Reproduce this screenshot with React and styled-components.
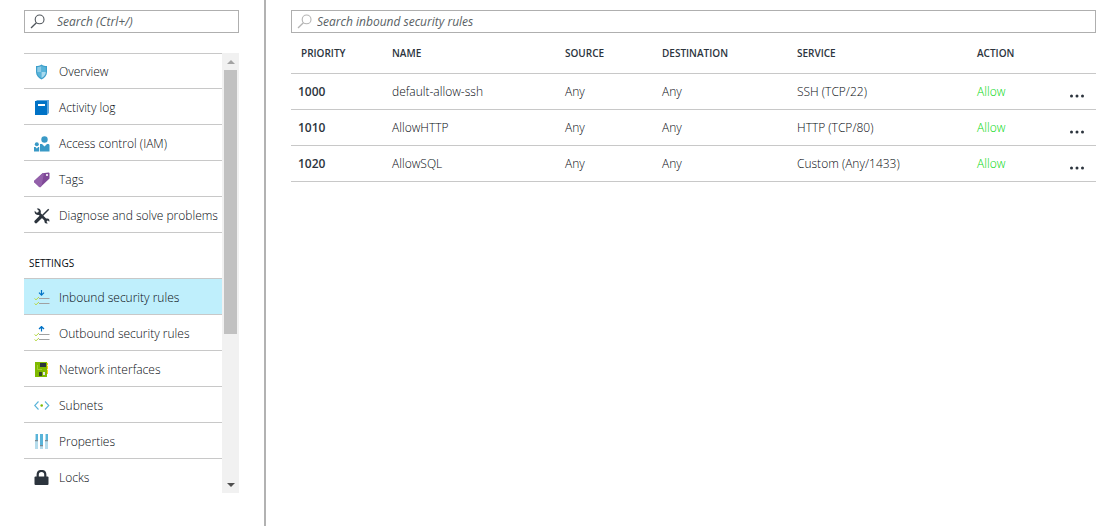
import React from "react";
import styled, { createGlobalStyle } from "styled-components";

const GlobalStyle = createGlobalStyle`
  *, *::before, *::after { box-sizing: border-box; }
  body {
    margin: 0;
    background: #fff;
    color: #060a10;
    font-family: "Open Sans", "Noto Sans", sans-serif;
    font-size: 12px;
    line-height: 16px;
    font-weight: 330;
  }
`;

const Page = styled.div`
  display: flex;
  min-height: 100vh;
`;

const Sidebar = styled.aside`
  display: flex;
  flex-direction: column;
  flex: none;
  gap: 20px;
  width: 266px;
  height: 100vh;
  padding: 10px 25px 33px 24px;
  border-right: 2px solid #b2b2b2;
`;

const Main = styled.main`
  flex: 1;
  min-width: 0;
  padding: 10px 22px 10px 25px;
`;

const SearchBox = styled.label`
  display: flex;
  align-items: center;
  gap: ${(p) => p.$gap}px;
  height: 23px;
  flex: none;
  padding: 0 5px;
  border: 1px solid #afafaf;
  color: ${(p) => p.$iconColor};
`;

const SearchInput = styled.input`
  flex: 1;
  min-width: 0;
  padding: 0;
  border: 0;
  outline: 0;
  background: transparent;
  color: #2c343d;
  font: italic 12px/16px "Open Sans", "Noto Sans", sans-serif;
  &::placeholder {
    color: #595f65;
    opacity: 1;
  }
`;

const MenuPane = styled.div`
  display: flex;
  flex: 1;
  min-height: 0;
`;

const Menu = styled.nav`
  flex: 1;
  min-width: 0;
  overflow-y: scroll;
  scrollbar-width: none;
`;

const MenuLink = styled.a`
  display: flex;
  align-items: center;
  gap: 9px;
  height: 36px;
  padding: 3px 0 0 10px;
  border-bottom: 1px solid #c8c8c8;
  background: ${(p) => (p.$active ? "#bfeffc" : "transparent")};
  color: inherit;
  text-decoration: none;
  white-space: nowrap;
`;

const MenuList = styled.ul`
  margin: 0;
  padding: 0;
  list-style: none;

  & > li:first-child > ${MenuLink} {
    border-top: ${(p) => (p.$ruled ? "1px solid #c8c8c8" : "0")};
    padding-top: ${(p) => (p.$ruled ? "2px" : "3px")};
  }
`;

const MenuHeading = styled.h2`
  height: 46px;
  margin: 0;
  padding: 22px 5px 0;
  border-bottom: 1px solid #c8c8c8;
  font-size: 10px;
  line-height: 16px;
  font-weight: 400;
`;

const ScrollTrack = styled.div`
  display: flex;
  flex-direction: column;
  flex: none;
  width: 17px;
  background: #f1f1f1;
`;

const ScrollArrow = styled.button`
  display: flex;
  align-items: center;
  justify-content: center;
  height: 17px;
  padding: 0;
  border: 0;
  background: transparent;
  color: ${(p) => (p.$dim ? "#a3a3a3" : "#505050")};
`;

const ScrollRun = styled.div`
  flex: 1;
  padding: 0 2px;
`;

const ScrollThumb = styled.div`
  height: 65%;
  background: #c1c1c1;
`;

const RulesTable = styled.table`
  width: 100%;
  table-layout: fixed;
  border-collapse: separate;
  border-spacing: 0;
`;

const Column = styled.col`
  width: ${(p) => p.$width}px;
`;

const HeadCell = styled.th`
  height: 41px;
  padding: 0 0 0 ${(p) => (p.$first ? 10 : 0)}px;
  border-bottom: 1px solid #c8c8c8;
  color: #2c343d;
  font-size: 10px;
  line-height: 16px;
  font-weight: 600;
  text-align: left;
`;

const Cell = styled.td`
  height: 36px;
  padding: 1px 0 0;
  border-bottom: 1px solid #c8c8c8;
  color: ${(p) => (p.$allow ? "#00d80c" : "inherit")};
`;

const PriorityCell = styled.th`
  height: 36px;
  padding: 1px 0 0 7px;
  border-bottom: 1px solid #c8c8c8;
  color: #2c343d;
  font-weight: 600;
  text-align: left;
`;

const MoreButton = styled.button`
  display: block;
  width: 18px;
  height: 16px;
  margin: 0 10px 0 auto;
  padding: 8px 0 0;
  border: 0;
  background: transparent;
  color: #2c343d;
`;

const Icon = styled.svg`
  display: block;
  flex: none;
`;

const SearchIcon = () => (
  <Icon width="15" height="15" viewBox="0 0 15 15" fill="none" stroke="currentColor" aria-hidden="true">
    <circle cx="9.6" cy="5.4" r="4.4" strokeWidth="1.1" />
    <path d="M6.4 8.8 L1 14" strokeWidth="1.3" />
  </Icon>
);

const Glyph = ({ children }) => (
  <Icon width="16" height="16" viewBox="0 0 16 16" fill="none" aria-hidden="true">
    {children}
  </Icon>
);

const ShieldIcon = () => (
  <Glyph>
    <path d="M7.5 .5 C9 1.6 11 2 13 2 V8 C13 11.5 10.5 14 7.5 15.5 C4.5 14 2 11.5 2 8 V2 C4 2 6 1.6 7.5 .5Z" fill="#3d9fcb" />
    <path d="M7.5 2 C6.2 2.8 4.8 3.1 3.2 3.2 V8 H7.5Z" fill="#8dcbe6" />
    <path d="M7.5 2 C8.8 2.8 10.2 3.1 11.8 3.2 V8 H7.5Z" fill="#59b4d9" />
    <path d="M3.2 8 H7.5 V14 C5 12.7 3.2 10.8 3.2 8Z" fill="#59b4d9" />
    <path d="M11.8 8 H7.5 V14 C10 12.7 11.8 10.8 11.8 8Z" fill="#a9daee" />
  </Glyph>
);

const BookIcon = () => (
  <Glyph>
    <path d="M1 2 L3 0 H15 V13 L13 15 H1Z" fill="#5ea5dc" />
    <path d="M1 1 H13 V15 H1Z" fill="#0072c6" />
    <path d="M4 4 H11 V6 H4Z" fill="#fff" />
  </Glyph>
);

const PeopleIcon = () => (
  <Glyph>
    <circle cx="10.5" cy="3.5" r="3.2" fill="#3999c6" />
    <path d="M6 8 H8 L10.5 10.5 L13 8 H14 C15 8 15.5 8.5 15.5 9.5 V15.5 H6Z" fill="#3999c6" />
    <circle cx="2.8" cy="8.3" r="2" fill="#3999c6" />
    <path d="M0 11 H1.5 L2.8 12.5 L4.2 11 H5.2 V15.5 H0Z" fill="#3999c6" />
  </Glyph>
);

const TagIcon = () => (
  <Glyph>
    <path d="M0 9 L8.5 1.3 L14.5 .5 Q15.5 .5 15.5 1.5 V6.5 L6.5 15 Q5.8 15.5 5 14.8 L.3 10.2 Q-.2 9.6 0 9Z" fill="#804998" />
    <path d="M0 9 L8.5 1.3 L10 1 L7.5 14 L6.5 15 Q5.8 15.5 5 14.8 L.3 10.2 Q-.2 9.6 0 9Z" fill="#9360aa" />
    <circle cx="13" cy="3" r="1.1" fill="#fff" />
  </Glyph>
);

const ToolsIcon = () => (
  <Glyph>
    <path d="M14.7 1.2 L8.5 7.5" stroke="#2c343d" strokeWidth="1.5" />
    <path d="M7.2 8.5 L2 13.7" stroke="#2c343d" strokeWidth="3.2" strokeLinecap="round" />
    <path d="M4.5 4.8 L12.8 13" stroke="#2c343d" strokeWidth="2.6" />
    <path d="M2.8 .7 L4.9 2.7 L4.3 4.3 L2.7 4.8 L.7 2.8 C0 5.5 2.3 7.5 5 6.7 L6.7 5 C7.5 2.3 5.5 0 2.8 .7Z" fill="#2c343d" />
    <path d="M10.5 12.5 L12.5 10.5 C15 10 16 12 15.2 13.8 L13.7 12.3 L12.3 13.7 L13.8 15.2 C11.8 16 10 15 10.5 12.5Z" fill="#2c343d" />
  </Glyph>
);

const RuleLines = () => (
  <>
    <path d="M5 8.5 H15.5 M5 13.5 H15.5" stroke="#a0a1a2" strokeWidth="1.2" />
    <path d="M.5 8.5 L2 9.8 L5 7 M.5 13.5 L2 14.8 L5 12" stroke="#b8d94a" />
  </>
);

const InboundIcon = () => (
  <Glyph>
    <RuleLines />
    <path d="M7.5 0 V5 M5 2.7 L7.5 5.2 L10 2.7" stroke="#0072c6" strokeWidth="1.2" />
  </Glyph>
);

const OutboundIcon = () => (
  <Glyph>
    <RuleLines />
    <path d="M7.5 5.5 V.8 M5 3 L7.5 .5 L10 3" stroke="#0072c6" strokeWidth="1.2" />
  </Glyph>
);

const NetworkCardIcon = () => (
  <Glyph>
    <path d="M12 1 H14 V12 H12Z" fill="#fcd116" />
    <path d="M12 3 H14 V4 H12Z M12 7 H14 V8 H12Z" fill="#fff3b0" />
    <path d="M1 0 H13 V15 H1Z" fill="#7fba00" />
    <path d="M6 1 H12 V5 H6Z" fill="#2c343d" />
    <path d="M3.5 3 V7.5 H8" stroke="#a5cf30" />
    <path d="M5 10 H8 V14 H5Z" fill="#3a4a28" />
    <path d="M9 10 H11 V13 H9Z" fill="#e5e5e5" />
  </Glyph>
);

const SubnetIcon = () => (
  <Glyph>
    <path d="M4.5 3.5 L.7 7.5 L4.5 11.5 M11 3.5 L14.8 7.5 L11 11.5" stroke="#59b4d9" strokeWidth="1.1" />
    <circle cx="7.7" cy="7.5" r="1.3" fill="#7fba00" />
  </Glyph>
);

const SlidersIcon = () => (
  <Glyph>
    <path d="M1 0 H4 V15 H1Z M6 0 H9 V15 H6Z M11 0 H14 V15 H11Z" fill="#b5dcec" />
    <path d="M2 0 H4 V6 H2Z M6 0 H9 V11 H6Z M12 0 H14 V6 H12Z" fill="#59b4d9" />
    <path d="M1 6 H4 V7.2 H1Z M6 11 H9 V12.2 H6Z M11 6 H14 V7.2 H11Z" fill="#7a8a94" />
  </Glyph>
);

const LockIcon = () => (
  <Glyph>
    <path d="M3.7 8 V4.8 C3.7 -.3 11.3 -.3 11.3 4.8 V8" stroke="#2c343d" strokeWidth="2.2" />
    <rect x=".5" y="6.5" width="14" height="8.5" rx="1" fill="#2c343d" />
  </Glyph>
);

const Dots = () => (
  <Icon width="18" height="4" viewBox="0 0 18 4" fill="currentColor" aria-hidden="true">
    <circle cx="3.5" cy="2" r="1.5" />
    <circle cx="9" cy="2" r="1.5" />
    <circle cx="14.5" cy="2" r="1.5" />
  </Icon>
);

const generalItems = [
  { label: "Overview", icon: ShieldIcon },
  { label: "Activity log", icon: BookIcon },
  { label: "Access control (IAM)", icon: PeopleIcon },
  { label: "Tags", icon: TagIcon },
  { label: "Diagnose and solve problems", icon: ToolsIcon },
];

const settingsItems = [
  { label: "Inbound security rules", icon: InboundIcon, active: true },
  { label: "Outbound security rules", icon: OutboundIcon },
  { label: "Network interfaces", icon: NetworkCardIcon },
  { label: "Subnets", icon: SubnetIcon },
  { label: "Properties", icon: SlidersIcon },
  { label: "Locks", icon: LockIcon },
];

const columns = [
  { label: "PRIORITY", width: 101 },
  { label: "NAME", width: 173 },
  { label: "SOURCE", width: 97 },
  { label: "DESTINATION", width: 135 },
  { label: "SERVICE", width: 180 },
  { label: "ACTION", width: 79 },
];

const rules = [
  { priority: "1000", name: "default-allow-ssh", service: "SSH (TCP/22)" },
  { priority: "1010", name: "AllowHTTP", service: "HTTP (TCP/80)" },
  { priority: "1020", name: "AllowSQL", service: "Custom (Any/1433)" },
];

const MenuItems = ({ items, ruled }) => (
  <MenuList $ruled={ruled}>
    {items.map(({ label, icon: ItemIcon, active }) => (
      <li key={label}>
        <MenuLink href="#" $active={active} aria-current={active ? "page" : undefined}>
          <ItemIcon />
          {label}
        </MenuLink>
      </li>
    ))}
  </MenuList>
);

export default function App() {
  return (
    <Page>
      <GlobalStyle />
      <Sidebar>
        <SearchBox $gap={12} $iconColor="#50565c">
          <SearchIcon />
          <SearchInput type="text" placeholder="Search (Ctrl+/)" aria-label="Search menu" />
        </SearchBox>
        <MenuPane>
          <Menu aria-label="Resource menu">
            <MenuItems items={generalItems} ruled />
            <MenuHeading>SETTINGS</MenuHeading>
            <MenuItems items={settingsItems} />
          </Menu>
          <ScrollTrack>
            <ScrollArrow type="button" $dim aria-label="Scroll up">
              <Icon width="8" height="4" viewBox="0 0 8 4"><path d="M0 4 L4 0 L8 4Z" fill="currentColor" /></Icon>
            </ScrollArrow>
            <ScrollRun><ScrollThumb /></ScrollRun>
            <ScrollArrow type="button" aria-label="Scroll down">
              <Icon width="8" height="4" viewBox="0 0 8 4"><path d="M0 0 H8 L4 4Z" fill="currentColor" /></Icon>
            </ScrollArrow>
          </ScrollTrack>
        </MenuPane>
      </Sidebar>
      <Main>
        <SearchBox $gap={5} $iconColor="#b4b4b4">
          <SearchIcon />
          <SearchInput type="text" placeholder="Search inbound security rules" aria-label="Search inbound security rules" />
        </SearchBox>
        <RulesTable>
          <colgroup>
            {columns.map((c) => <Column key={c.label} $width={c.width} />)}
            <Column $width={40} />
          </colgroup>
          <thead>
            <tr>
              {columns.map((c, i) => (
                <HeadCell key={c.label} scope="col" $first={i === 0}>{c.label}</HeadCell>
              ))}
              <HeadCell as="td" />
            </tr>
          </thead>
          <tbody>
            {rules.map((r) => (
              <tr key={r.priority}>
                <PriorityCell scope="row">{r.priority}</PriorityCell>
                <Cell>{r.name}</Cell>
                <Cell>Any</Cell>
                <Cell>Any</Cell>
                <Cell>{r.service}</Cell>
                <Cell $allow>Allow</Cell>
                <Cell>
                  <MoreButton type="button" aria-label={`More actions for ${r.name}`}><Dots /></MoreButton>
                </Cell>
              </tr>
            ))}
          </tbody>
        </RulesTable>
      </Main>
    </Page>
  );
}
